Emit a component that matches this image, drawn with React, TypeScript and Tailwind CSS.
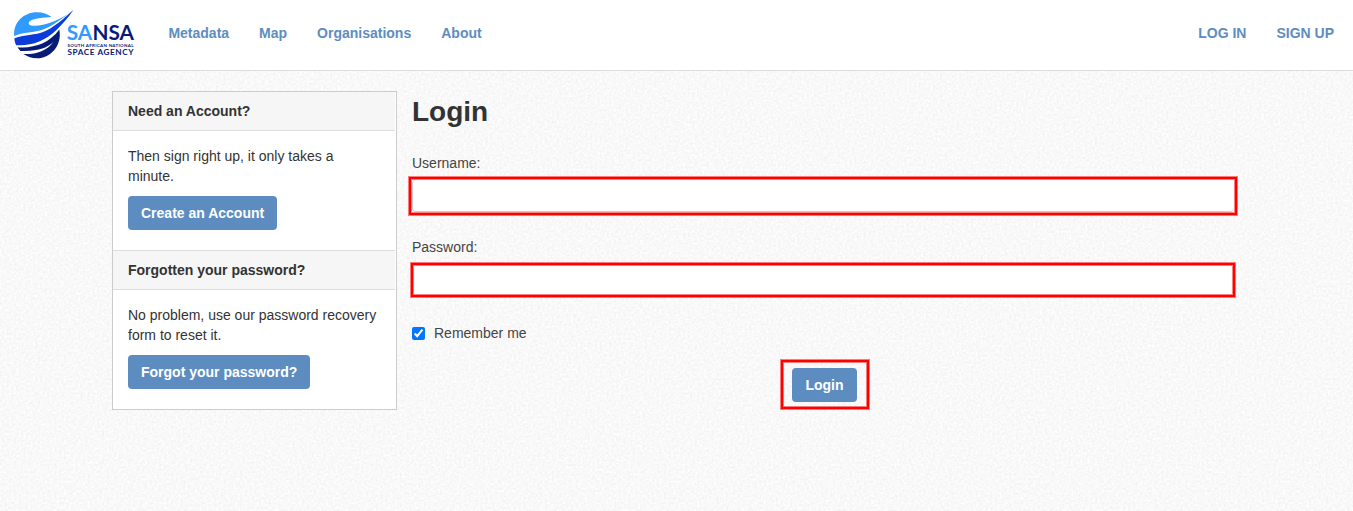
import type { ReactNode } from "react";

function Logo() {
  return (
    <svg width="126" height="54" viewBox="10 7 126 54" role="img" aria-label="SANSA">
      <path fill="#2f9bff" d="M14.200 36C13 23 23 12.200 37 12.200c6 0 10.500 1.600 14.500 4.900C44 17.500 33 18.500 29.500 21.500c-2 2.200-.3 4.200 4.500 4.300 11 .2 23-5.300 33.500-11.300C59 21 50 27.500 41 30.200 32 32.500 21 32.500 14.200 36Z" />
      <path fill="#0b3bd8" d="M73.500 9.800C65 17.500 53 29 41 32.800 31 35.500 20 35.500 14.300 38.500c.2 2.500.9 4.700 1.900 6.700C31 46.200 45 41 56.500 30 63 23.500 69 17 73.500 9.800Z" />
      <path fill="#061a78" d="M59.300 29.500C49 43.500 34 48.500 17.500 47.200c.9 1.500 1.900 2.600 3 3.700C38 51.500 47 48 54 41.500 46 51.500 36 54.500 23.500 54 27.500 56.800 32 58.300 37 58.300c14 0 25.500-13.300 22.300-28.800Z" />
      <g fontFamily="Lato, sans-serif">
        <text x="66.700" y="39.800" fontSize="21" textLength="25.500" lengthAdjust="spacingAndGlyphs" fill="#2f9bff">SA</text>
        <text x="92.500" y="39.800" fontSize="21" textLength="41.500" lengthAdjust="spacingAndGlyphs" fill="#061a78">NSA</text>
        <text x="67.500" y="46.500" fontSize="4.500" textLength="66" fill="#061a78">SOUTH AFRICAN NATIONAL</text>
        <text x="67.500" y="55.300" fontSize="8.200" fontWeight="700" textLength="66" fill="#061a78">SPACE AGENCY</text>
      </g>
    </svg>
  );
}

function Grain() {
  return (
    <svg className="absolute inset-0 -z-10" width="100%" height="100%" aria-hidden="true">
      <filter id="grain" x="0" y="0" width="100%" height="100%" colorInterpolationFilters="sRGB">
        <feTurbulence type="fractalNoise" baseFrequency="0.42" numOctaves="2" seed="4" />
        <feColorMatrix values="0.08 0 0 0 0.935 0.08 0 0 0 0.935 0.08 0 0 0 0.935 0 0 0 0 1" />
      </filter>
      <rect width="100%" height="100%" filter="url(#grain)" />
    </svg>
  );
}

function Button({ children, className = "px-[13px]" }: { children: ReactNode; className?: string }) {
  return (
    <button type="button" className={`h-[34px] rounded bg-[#5d8dc0] font-bold text-white ${className}`}>
      {children}
    </button>
  );
}

function SideModule({ title, text, action, last }: { title: string; text: string; action: string; last?: boolean }) {
  return (
    <section>
      <h2 className="mr-px h-[39px] border-b border-[#ddd] bg-[#f6f6f6] px-[15px] pt-[9px] font-bold">{title}</h2>
      <div className={last ? "h-[118px] px-[15px] pt-[15px]" : "mr-px h-[120px] border-b border-[#ddd] px-[15px] pt-[15px]"}>
        <p className="mb-[10px]">{text}</p>
        <Button>{action}</Button>
      </div>
    </section>
  );
}

export default function App() {
  return (
    <div className="relative isolate h-[511px] overflow-hidden bg-[#f8f8f8] font-['Liberation_Sans',Arial,sans-serif] text-sm leading-5 text-[#333]">
      <Grain />
      <header className="flex h-[71px] items-start border-b border-[#ddd] bg-white pr-[19px] pl-[10px] font-bold text-[#5d8dc0]">
        <div className="w-[158.4px] pt-[7px]">
          <Logo />
        </div>
        <nav className="flex gap-[30px] pt-[23px]">
          <a>Metadata</a>
          <a>Map</a>
          <a>Organisations</a>
          <a>About</a>
        </nav>
        <nav className="ml-auto flex gap-[30px] pt-[23px]">
          <a>LOG IN</a>
          <a>SIGN UP</a>
        </nav>
      </header>

      <main className="flex items-start pt-[20px] pl-[112px]">
        <aside className="h-[319px] w-[285px] border border-[#ccc] bg-white">
          <SideModule title="Need an Account?" text="Then sign right up, it only takes a minute." action="Create an Account" />
          <SideModule title="Forgotten your password?" text="No problem, use our password recovery form to reset it." action="Forgot your password?" last />
        </aside>

        <form className="ml-[12px] w-[828px] text-[#444]">
          <h1 className="h-[62px] pt-[1px] pl-[3px] text-[28px] leading-10 font-bold text-[#333]">Login</h1>
          <label className="block h-6 pl-[3px]" htmlFor="username">Username:</label>
          <div className="h-[38px] border-2 border-[#f00] bg-white p-px ring-1 ring-[#f00]/50 inset-ring-1 inset-ring-[#f00]/50">
            <input id="username" className="block h-8 w-full rounded border-b border-l border-[#ccc] bg-white px-2" />
          </div>
          <label className="mt-[22px] block h-[26px] pl-[3px]" htmlFor="password">Password:</label>
          <div className="ml-[2px] h-[34px] w-[824px] border-2 border-[#f00] bg-white p-px ring-1 ring-[#f00]/50 inset-ring-1 inset-ring-[#f00]/50">
            <input id="password" type="password" className="block h-7 w-full bg-white px-2" />
          </div>
          <label className="mt-[26px] flex h-5 items-center pl-[3px]">
            <input type="checkbox" defaultChecked className="mt-px mr-[9px] size-[13px]" />
            Remember me
          </label>
          <div className="mt-[17px] ml-[372px] flex h-[49px] w-[88px] items-start border-2 border-[#f00] pt-[6px] pl-[9px] ring-1 ring-[#f00]/50 inset-ring-1 inset-ring-[#f00]/50">
            <Button className="w-[65px] text-center">Login</Button>
          </div>
        </form>
      </main>
    </div>
  );
}
